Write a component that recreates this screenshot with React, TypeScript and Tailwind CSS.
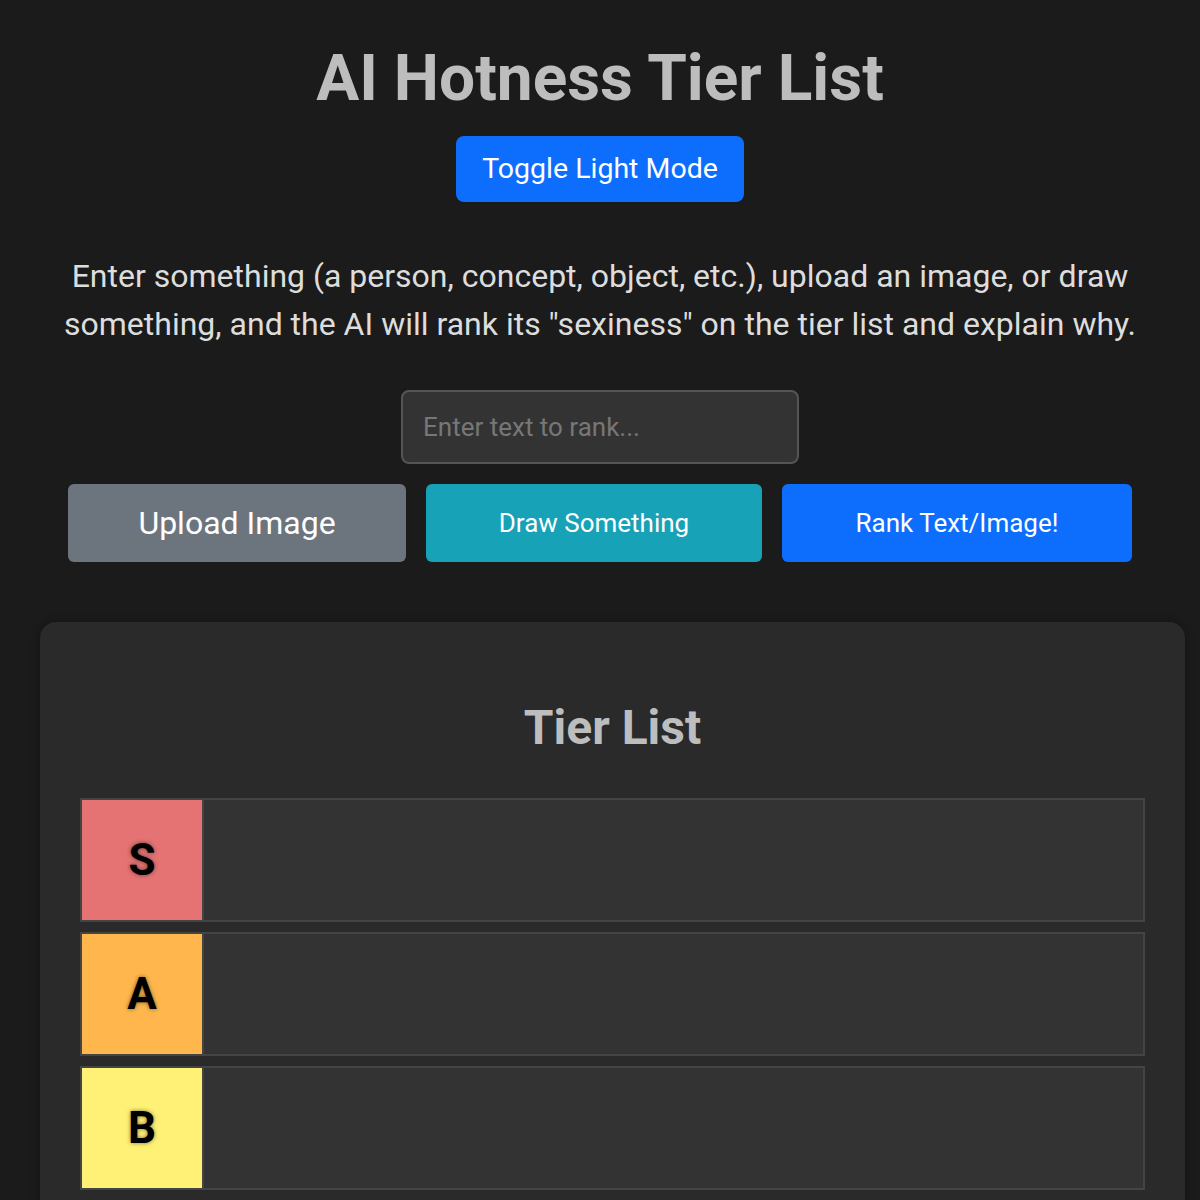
import React from "react";

const tiers = [
  { label: "S", color: "bg-[#e57373]" },
  { label: "A", color: "bg-[#ffb74d]" },
  { label: "B", color: "bg-[#fff176]" },
];

export default function App() {
  return (
    <div
      className="min-h-[1200px] w-[1200px] overflow-hidden bg-[#1b1b1b]"
      style={{ fontFamily: "Roboto, 'Noto Sans', sans-serif" }}
    >
      <div className="flex flex-col items-center pt-[37px]">
        <h1 className="text-[64px] font-bold leading-[84px] text-[#bdbdbd]">AI Hotness Tier List</h1>
        <button className="mt-[15px] h-[66px] w-[288px] rounded-[8px] bg-[#0d6efd] text-[28.5px] text-white">
          Toggle Light Mode
        </button>
        <p className="mt-[50px] w-[1120px] text-center text-[32px] leading-[48px] text-[#dddddd]">
          Enter something (a person, concept, object, etc.), upload an image, or draw something, and the AI will rank its "sexiness" on the tier list and explain why.
        </p>
        <input
          placeholder="Enter text to rank..."
          className="mt-[42px] h-[74px] w-[398px] rounded-[8px] border-2 border-[#555555] bg-[#333333] px-[20px] text-[26px] text-[#dddddd] placeholder:text-[#777777] outline-none"
        />
        <div className="mt-[20px] flex gap-[20px]">
          <button className="h-[78px] w-[338px] rounded-[6px] bg-[#6c757d] text-[32px] text-white">Upload Image</button>
          <button className="h-[78px] w-[336px] rounded-[6px] bg-[#17a2b8] text-[26px] text-white">Draw Something</button>
          <button className="h-[78px] w-[350px] rounded-[6px] bg-[#0d6efd] text-[26px] text-white">Rank Text/Image!</button>
        </div>
      </div>
      <div className="ml-[40px] mt-[60px] w-[1145px] rounded-[16px] bg-[#2a2a2a] px-[40px] pt-[76px] pb-[40px] shadow-[0_0_10px_rgba(0,0,0,0.3)]">
        <h2 className="text-center text-[48px] font-bold leading-[60px] text-[#bdbdbd]">Tier List</h2>
        <div className="mt-[40px] flex flex-col gap-[10px]">
          {tiers.map((t) => (
            <div key={t.label} className="flex h-[124px] border-2 border-[#444444] bg-[#333333]">
              <div
                className={`flex h-[120px] w-[120px] items-center justify-center ${t.color} text-[44px] font-bold text-black`}
                style={{ textShadow: "0 0 4px rgba(0,0,0,0.5)" }}
              >
                {t.label}
              </div>
              <div className="flex-1 border-l-2 border-[#444444]" />
            </div>
          ))}
        </div>
      </div>
    </div>
  );
}
